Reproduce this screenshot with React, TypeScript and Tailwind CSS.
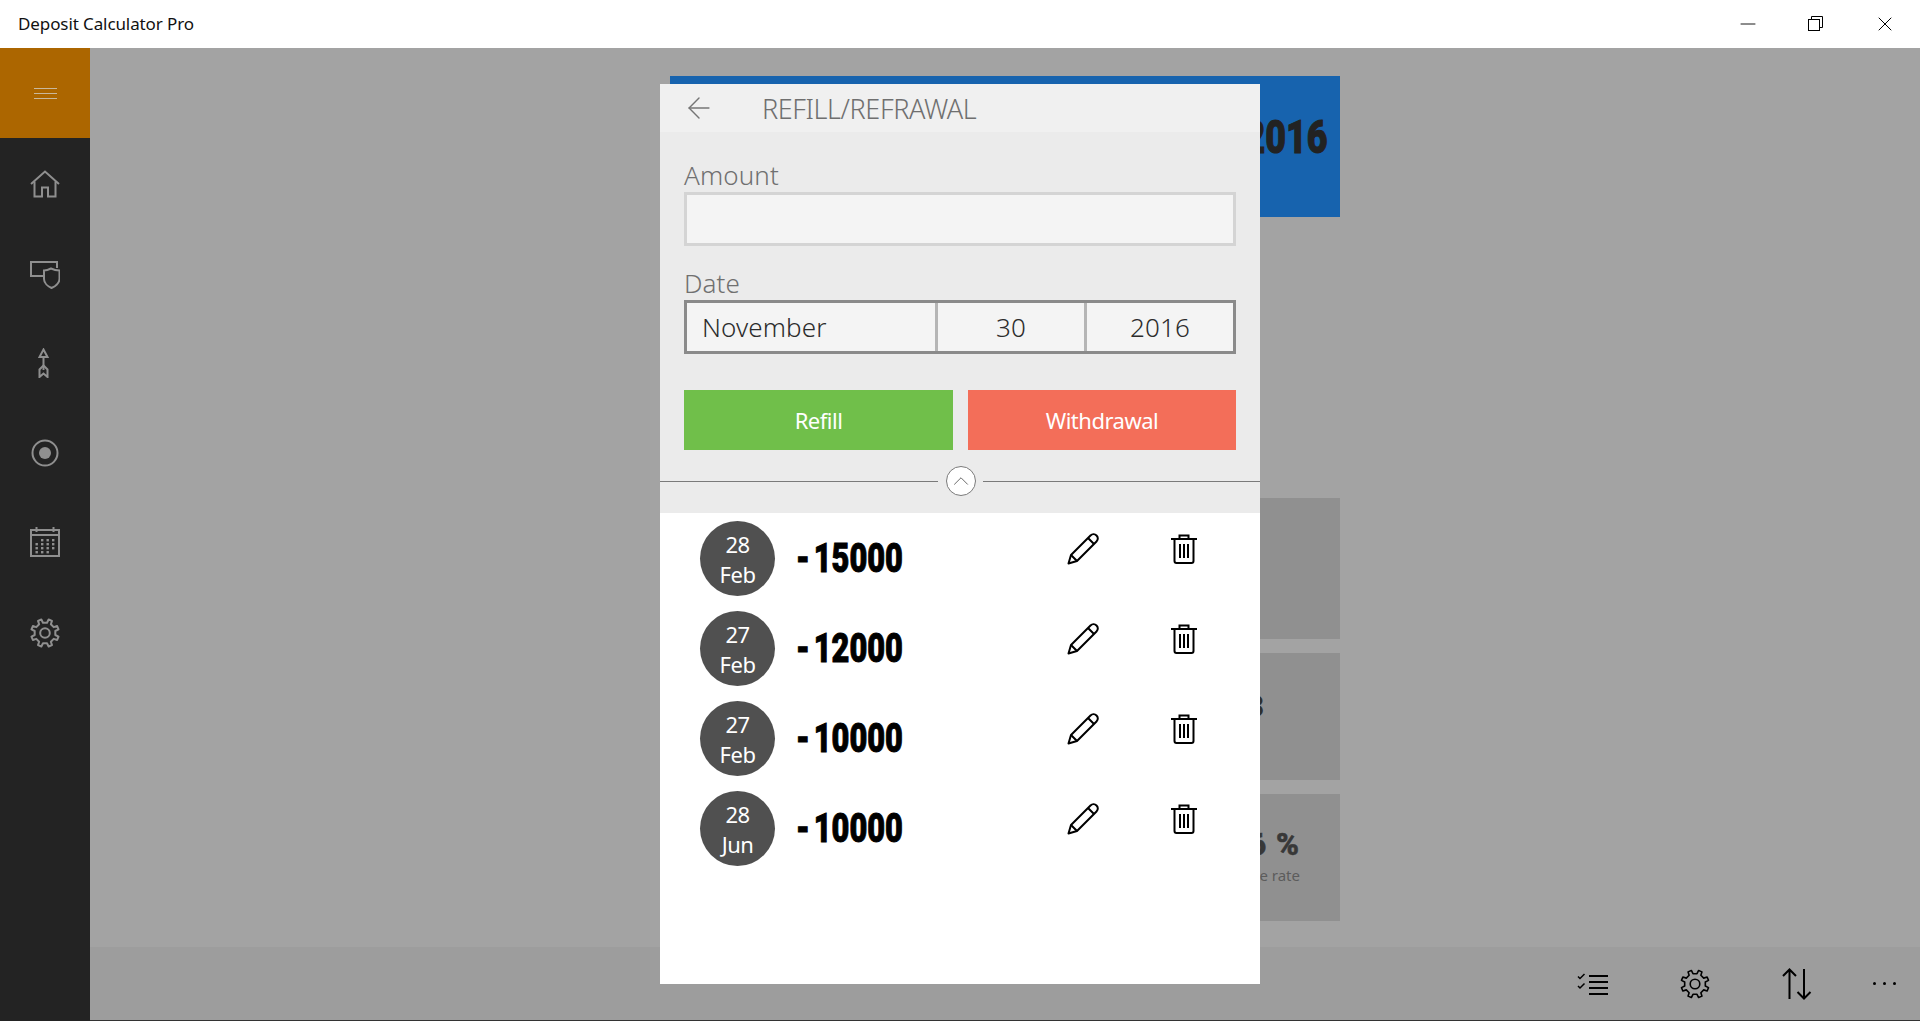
import { ArrowLeft, ChevronUp, Minus, X } from 'lucide-react';

const entries = [
  { day: '28', month: 'Feb', amount: '- 15000' },
  { day: '27', month: 'Feb', amount: '- 12000' },
  { day: '27', month: 'Feb', amount: '- 10000' },
  { day: '28', month: 'Jun', amount: '- 10000' },
];

// 8 tooth gear outline
function gearPath(cx: number, cy: number, outer: number, inner: number) {
  const pts: string[] = [];
  for (let i = 0; i < 8; i++) {
    const a = (i * Math.PI) / 4 - Math.PI / 8;
    const steps: [number, number][] = [
      [inner, a - 0.2],
      [outer, a - 0.13],
      [outer, a + 0.13],
      [inner, a + 0.2],
    ];
    for (const [r, t] of steps) {
      pts.push(`${(cx + r * Math.cos(t)).toFixed(2)} ${(cy + r * Math.sin(t)).toFixed(2)}`);
    }
  }
  return `M${pts.join('L')}Z`;
}

function Gear({ size, width }: { size: number; width: number }) {
  return (
    <svg width={size} height={size} viewBox="0 0 30 30" fill="none" stroke="currentColor" strokeWidth={width} strokeLinejoin="round">
      <path d={gearPath(15, 15, 14, 10.5)} />
      <circle cx="15" cy="15" r="4.8" />
    </svg>
  );
}

function HomeIcon() {
  return (
    <svg className="mt-[2px]" width="30" height="28" viewBox="0 0 30 28" fill="none" stroke="currentColor" strokeWidth="2">
      <path d="M1 14 15 1.5 29 14" />
      <path d="M4.5 11.5V26.5H12V17.5H18V26.5H25.5V11.5" />
    </svg>
  );
}

function DeviceShieldIcon() {
  return (
    <svg className="mt-[3px]" width="30" height="28" viewBox="0 0 30 28" fill="none" stroke="currentColor" strokeWidth="2">
      <path d="M13 15H1V1H27V7" />
      <path d="M14 9.5C17 9.5 19 8.5 21 7.5 23 8.5 26 9.5 29.5 9.5V18C29.5 22 25 25.5 21.5 27 18 25.5 14 22 14 18Z" />
    </svg>
  );
}

function ArrowUpIcon() {
  return (
    <svg className="mr-[2px]" width="12" height="30" viewBox="0 0 12 30" fill="none" stroke="currentColor" strokeWidth="2">
      <path d="M5.5 1.5 9.5 9H1.5Z" />
      <path d="M5.5 9V22" />
      <path d="M1.5 29V21.5L5.5 17.5 9.5 21.5V29L5.5 25.5Z" />
    </svg>
  );
}

function TargetIcon() {
  return (
    <svg width="28" height="28" viewBox="0 0 28 28" fill="none">
      <circle cx="14" cy="14" r="12.5" stroke="currentColor" strokeWidth="2" />
      <circle cx="14" cy="14" r="6" fill="currentColor" />
    </svg>
  );
}

function CalendarIcon() {
  const dots = [
    [12, 13], [17.5, 13], [23, 13], [12, 17], [17.5, 17], [23, 17],
    [6.5, 17], [6.5, 21], [12, 21], [17.5, 21], [23, 21], [6.5, 25], [12, 25], [17.5, 25],
  ];
  return (
    <svg className="-mt-[2px]" width="30" height="30" viewBox="0 0 30 30" fill="none" stroke="currentColor" strokeWidth="2">
      <rect x="1" y="3" width="28" height="26" />
      <path d="M1 8H29M6.5 0V5M23.5 0V5" />
      {dots.map(([x, y]) => (
        <rect key={`${x}-${y}`} x={x - 1} y={y - 1} width="2.4" height="2.4" fill="currentColor" stroke="none" />
      ))}
    </svg>
  );
}

function RestoreIcon() {
  return (
    <svg width="16" height="16" viewBox="0 0 16 16" fill="none" stroke="#000" strokeWidth="1">
      <rect x="0.5" y="3.5" width="11" height="11" />
      <path d="M3.5 3.5V0.5H14.5V11.5H11.5" />
    </svg>
  );
}

function PencilIcon() {
  return (
    <svg width="32" height="32" viewBox="0 0 32 32" fill="none" stroke="#000" strokeWidth="2" strokeLinejoin="round">
      <path d="M1.5 30.5 4 22 23.5 2.5C25.5 0.5 28 1 29.5 2.5 31 4 31.5 6.5 29.5 8.5L10 28Z" />
      <path d="M4 22 10 28M21 5 27 11" />
    </svg>
  );
}

function TrashIcon() {
  return (
    <svg width="26" height="30" viewBox="0 0 26 30" fill="none" stroke="#000" strokeWidth="2">
      <path d="M0 5H26M8.5 5V1.5H17.5V5" />
      <path d="M3.5 5V27C3.5 28.2 4.3 29 5.5 29H20.5C21.7 29 22.5 28.2 22.5 27V5" />
      <path d="M9 10V24M13 10V24M17 10V24" />
    </svg>
  );
}

function ChecklistIcon() {
  return (
    <svg width="32" height="22" viewBox="0 0 32 22" fill="none" stroke="#000" strokeWidth="2">
      <path d="M12 3H31M12 9H31M12 15H31M12 21H31" />
      <path d="M1 3.5 3 5.5 7.5 1M1 13 3 15 7.5 10.5" strokeWidth="1.5" />
    </svg>
  );
}

function SortIcon() {
  return (
    <svg width="30" height="32" viewBox="0 0 30 32" fill="none" stroke="#000" strokeWidth="2">
      <path d="M7.5 31V1.5M1 8 7.5 1.5 14 8" />
      <path d="M22 1V30.5M15.5 24 22 30.5 28.5 24" />
    </svg>
  );
}

export default function App() {
  const navIcons = [HomeIcon, DeviceShieldIcon, ArrowUpIcon, TargetIcon, CalendarIcon];

  return (
    <div className="relative flex h-[1021px] w-full flex-col overflow-hidden bg-white font-['Noto_Sans',sans-serif]">
      {/* Title bar */}
      <header className="flex h-12 shrink-0 items-center justify-between bg-white">
        <span className="pl-[18px] text-[17px] tracking-[-0.1px] text-[#111]">Deposit Calculator Pro</span>
        <div className="flex items-center">
          <div className="flex w-[69px] justify-center"><Minus size={24} strokeWidth={0.9} color="#000" /></div>
          <div className="flex w-[69px] justify-center pr-[2px]"><RestoreIcon /></div>
          <div className="flex w-[69px] justify-center pr-[2px]"><X size={24} strokeWidth={1} color="#000" /></div>
        </div>
      </header>

      <div className="flex min-h-0 flex-1">
        {/* Side nav */}
        <nav className="flex w-[90px] shrink-0 flex-col bg-[#232323] text-[#8f8f8f]">
          <div className="flex h-[90px] flex-col items-center justify-center gap-[4px] bg-[#ac6600]">
            <span className="h-[1px] w-[23px] bg-[#c9b89c]" />
            <span className="h-[1px] w-[23px] bg-[#c9b89c]" />
            <span className="h-[1px] w-[23px] bg-[#c9b89c]" />
          </div>
          {navIcons.map((Icon, i) => (
            <div key={i} className="flex h-[90px] items-center justify-center">
              <Icon />
            </div>
          ))}
          <div className="flex h-[90px] items-center justify-center">
            <Gear size={30} width={2} />
          </div>
        </nav>

        {/* Dimmed page behind the dialog */}
        <main className="flex min-w-0 flex-1 flex-col bg-[#a3a3a3]">
          <div className="min-h-0 flex-1 pl-[580px] pt-[28px]">
            <div className="flex w-[670px] flex-col">
              <div className="flex h-[141px] items-center justify-end bg-[#1763ae] pb-[18px] pr-3">
                <span className="inline-block origin-right scale-x-[0.78] font-['Roboto',sans-serif] text-[46px] font-black text-[#222] [-webkit-text-stroke:1px_#222]">2016</span>
              </div>
              <div className="mt-[281px] h-[141px] bg-[#909090]" />
              <div className="mt-[14px] flex h-[127px] items-center justify-end bg-[#909090] pb-[22px] pr-[76px]">
                <span className="font-['Roboto',sans-serif] text-[32px] font-black text-[#2f2f2f]">3</span>
              </div>
              <div className="mt-[14px] flex h-[127px] flex-col items-end justify-center bg-[#909090] pr-[40px]">
                <span className="font-['Roboto',sans-serif] text-[31px] font-black leading-8 tracking-[1px] text-[#383838] [-webkit-text-stroke:0.5px_#383838]">6 %</span>
                <span className="mt-[3px] text-[15px] text-[#5c5c5c]">e rate</span>
              </div>
            </div>
          </div>
          <div className="flex h-[74px] shrink-0 items-center justify-end border-b border-[#333] bg-[#9d9d9d] text-black">
            <div className="flex w-[102px] justify-center"><ChecklistIcon /></div>
            <div className="flex w-[102px] justify-center"><Gear size={30} width={1.6} /></div>
            <div className="flex w-[102px] justify-center"><SortIcon /></div>
            <div className="flex w-[72px] items-center justify-center gap-[7px]">
              <span className="h-[3px] w-[3px] rounded-full bg-black" />
              <span className="h-[3px] w-[3px] rounded-full bg-black" />
              <span className="h-[3px] w-[3px] rounded-full bg-black" />
            </div>
          </div>
        </main>
      </div>

      {/* Refill dialog */}
      <section className="absolute left-[660px] top-[84px] flex h-[900px] w-[600px] flex-col bg-white">
        <div className="flex h-12 shrink-0 items-center bg-[#f0f0f0]">
          <ArrowLeft className="ml-[22px]" size={34} strokeWidth={1} color="#757575" />
          <h1 className="ml-[46px] pt-[2px] text-[27px] font-light tracking-[-0.4px] text-[#6f6f6f]">REFILL/REFRAWAL</h1>
        </div>

        <div className="flex h-[381px] shrink-0 flex-col bg-[#ebebeb] px-6">
          <label className="mt-[26px] text-[26px] font-light leading-[34px] tracking-[0.1px] text-[#707070]">Amount</label>
          <div className="h-[54px] border-[3px] border-[#d4d4d4] bg-[#f4f4f4]" />
          <label className="mt-[20px] text-[26px] font-light leading-[34px] tracking-[0.1px] text-[#707070]">Date</label>
          <div className="flex h-[54px] border-[3px] border-[#8a8a8a] bg-[#f4f4f4] text-[26px] font-light tracking-[0.1px] text-[#2c2c2c]">
            <div className="flex w-[251px] items-center border-r-[3px] border-[#b5b5b5] pl-[15px]">November</div>
            <div className="flex w-[149px] items-center justify-center border-r-[3px] border-[#b5b5b5]">30</div>
            <div className="flex flex-1 items-center justify-center">2016</div>
          </div>
          <div className="mt-[36px] flex gap-[15px]">
            <button className="h-[60px] w-[269px] bg-[#70bf4a] text-[22px] tracking-[-0.5px] text-white">Refill</button>
            <button className="h-[60px] flex-1 bg-[#f36e59] text-[22px] tracking-[-0.5px] text-white">Withdrawal</button>
          </div>
          <div className="-mx-6 mt-[16px] flex items-center">
            <span className="h-[1px] w-[278px] bg-[#7a7a7a]" />
            <span className="ml-[8px] flex h-[30px] w-[30px] items-center justify-center rounded-full border border-[#7a7a7a] bg-white">
              <ChevronUp size={26} strokeWidth={0.9} color="#666" />
            </span>
            <span className="ml-[7px] h-[1px] flex-1 bg-[#7a7a7a]" />
          </div>
        </div>

        <ul className="flex flex-col pt-2">
          {entries.map((entry, i) => (
            <li key={i} className="flex h-[90px] items-start pl-10">
              <div className="flex h-[75px] w-[75px] shrink-0 flex-col items-center justify-center rounded-full bg-[#505050] text-[22px] leading-[30px] tracking-[-0.5px] text-white">
                <span>{entry.day}</span>
                <span>{entry.month}</span>
              </div>
              <span className="ml-[21px] mt-[12px] inline-block w-[200px] origin-left scale-x-[0.75] whitespace-nowrap font-['Roboto',sans-serif] text-[41px] font-black leading-[50px] text-black [word-spacing:-5px] [-webkit-text-stroke:1px_#000]">
                {entry.amount}
              </span>
              <div className="ml-[71px] mt-3"><PencilIcon /></div>
              <div className="ml-[72px] mt-[13px]"><TrashIcon /></div>
            </li>
          ))}
        </ul>
      </section>
    </div>
  );
}
